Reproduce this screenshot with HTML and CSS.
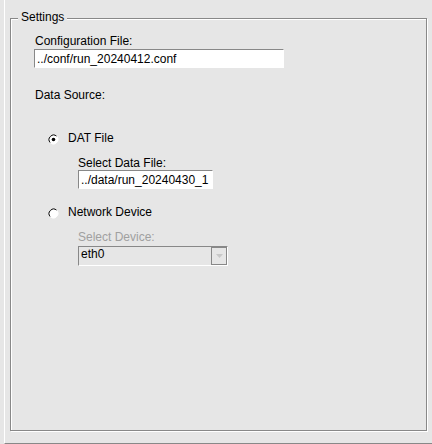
FILE: index.html
```html
<!DOCTYPE html>
<html lang="en">
<head>
<meta charset="utf-8">
<title>Settings</title>
<link rel="stylesheet" href="styles.css">
</head>
<body>
<div class="frame">
  <fieldset class="settings">
    <legend class="settings-title">Settings</legend>
    <div class="settings-body">
      <label class="lbl cfg-lbl" for="cfg">Configuration File:</label>
      <input class="field cfg-field" id="cfg" type="text" value="../conf/run_20240412.conf" readonly>

      <div class="lbl section-lbl">Data Source:</div>

      <div class="option option-dat">
        <svg class="radio" width="11" height="11" viewBox="0 0 11 11">
          <circle cx="5.5" cy="5.5" r="4.5" fill="#fff"/>
          <path d="M2.32 8.68 A4.5 4.5 0 0 1 8.68 2.32" fill="none" stroke="#000" stroke-width="1"/>
          <path d="M8.68 2.32 A4.5 4.5 0 0 1 2.32 8.68" fill="none" stroke="#fff" stroke-width="1"/>
          <circle cx="5.5" cy="5.5" r="1.8" fill="#000"/>
        </svg>
        <span class="option-text">DAT File</span>
      </div>
      <div class="sub">
        <label class="lbl" for="dat">Select Data File:</label>
        <input class="field data-field" id="dat" type="text" value="../data/run_20240430_1" readonly>
      </div>

      <div class="option option-net">
        <svg class="radio" width="11" height="11" viewBox="0 0 11 11">
          <circle cx="5.5" cy="5.5" r="4.5" fill="#fff"/>
          <path d="M2.32 8.68 A4.5 4.5 0 0 1 8.68 2.32" fill="none" stroke="#000" stroke-width="1"/>
          <path d="M8.68 2.32 A4.5 4.5 0 0 1 2.32 8.68" fill="none" stroke="#fff" stroke-width="1"/>
        </svg>
        <span class="option-text">Network Device</span>
      </div>
      <div class="sub">
        <div class="lbl dim">Select Device:</div>
        <div class="combo">
          <span class="combo-value">eth0</span>
          <span class="combo-btn">
            <svg width="7" height="4" viewBox="0 0 7 4"><path d="M0 0 H7 L3.5 4 Z" fill="#c8c8c8"/></svg>
          </span>
        </div>
      </div>
    </div>
  </fieldset>
</div>
</body>
</html>
```

FILE: styles.css
```css
html, body {
  margin: 0;
  padding: 0;
  background: #e6e6e6;
}

body {
  font-family: "Liberation Sans", Arial, sans-serif;
  font-size: 12px;
  color: #000;
  width: 432px;
  height: 444px;
  overflow: hidden;
}

.frame {
  box-sizing: border-box;
  height: 444px;
  margin-left: 4px;
  padding-top: 10px;
  border-left: 1px solid #fff;
  border-bottom: 1px solid #888;
}

.settings {
  box-sizing: border-box;
  width: 417px;
  height: 421px;
  margin: 0 0 0 5px;
  padding: 0;
  min-inline-size: 0;
  border: 1px solid #888;
  box-shadow: 1px 1px 0 #fff, inset 1px 1px 0 #fff;
}

.settings-title {
  margin-left: 7px;
  padding: 0 3px 3px;
  line-height: 14px;
  background: #e6e6e6;
}

.settings-body {
  display: flex;
  flex-direction: column;
  align-items: flex-start;
  padding-left: 23px;
}

.lbl {
  display: block;
  line-height: 14px;
  height: 14px;
}

.cfg-lbl {
  margin-top: 7px;
  padding-left: 1px;
}

.field {
  box-sizing: border-box;
  height: 19px;
  margin: 0;
  padding: 0 2px;
  border: 1px solid;
  border-color: #888 #fff #fff #888;
  background: #fff;
  font-family: "Liberation Sans", Arial, sans-serif;
  font-size: 12px;
  color: #000;
  outline: none;
}

.cfg-field {
  width: 250px;
  margin-top: 1px;
}

.section-lbl {
  margin-top: 20px;
  padding-left: 1px;
}

.option {
  display: flex;
  align-items: flex-start;
  gap: 9px;
  height: 14px;
  line-height: 14px;
  padding-left: 14px;
}

.option-dat {
  margin-top: 29px;
}

.option-net {
  margin-top: 16px;
}

.radio {
  display: block;
  margin-top: 3px;
  flex: none;
}

.sub {
  display: flex;
  flex-direction: column;
  align-items: flex-start;
  padding-left: 44px;
  margin-top: 11px;
}

.data-field {
  width: 135px;
}

.dim {
  color: #a0a0a0;
}

.combo {
  box-sizing: border-box;
  display: flex;
  align-items: flex-start;
  width: 150px;
  height: 20px;
  margin-top: 2px;
  border: 1px solid;
  border-color: #888 #fff #fff #888;
  background: #e6e6e6;
}

.combo-value {
  padding-left: 2px;
  line-height: 14px;
}

.combo-btn {
  box-sizing: border-box;
  display: flex;
  align-items: center;
  justify-content: center;
  width: 16px;
  height: 18px;
  margin-left: auto;
  border: 1px solid #888;
}

.combo-btn svg {
  display: block;
}
```
